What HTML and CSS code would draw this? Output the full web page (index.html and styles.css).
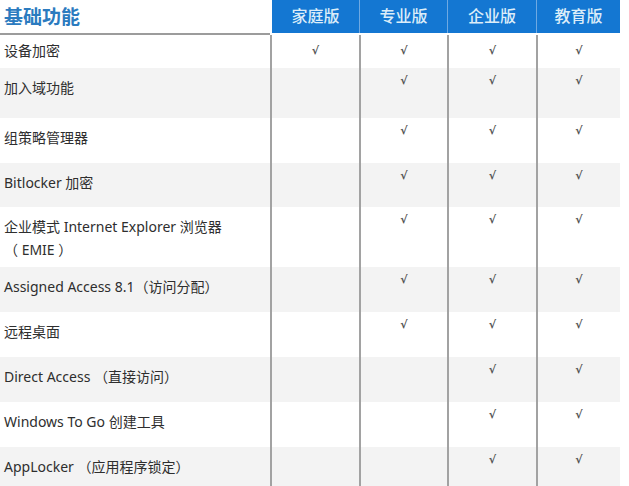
FILE: index.html
```html
<!DOCTYPE html>
<html lang="zh">
<head>
<meta charset="utf-8">
<link rel="stylesheet" href="styles.css">
</head>
<body>
<div class="table">
  <div class="head">
    <div class="title">基础功能</div>
    <div class="ed first">家庭版</div>
    <div class="ed">专业版</div>
    <div class="ed">企业版</div>
    <div class="ed">教育版</div>
  </div>

  <div class="row r1">
    <div class="name">设备加密</div>
    <div class="c">√</div><div class="c">√</div><div class="c">√</div><div class="c">√</div>
  </div>
  <div class="row alt r2">
    <div class="name">加入域功能</div>
    <div class="c"></div><div class="c">√</div><div class="c">√</div><div class="c">√</div>
  </div>
  <div class="row">
    <div class="name">组策略管理器</div>
    <div class="c"></div><div class="c">√</div><div class="c">√</div><div class="c">√</div>
  </div>
  <div class="row alt r4">
    <div class="name">Bitlocker 加密</div>
    <div class="c"></div><div class="c">√</div><div class="c">√</div><div class="c">√</div>
  </div>
  <div class="row r5">
    <div class="name">企业模式 Internet Explorer 浏览器<br>（ EMIE ）</div>
    <div class="c"></div><div class="c">√</div><div class="c">√</div><div class="c">√</div>
  </div>
  <div class="row alt">
    <div class="name">Assigned Access 8.1（访问分配）</div>
    <div class="c"></div><div class="c">√</div><div class="c">√</div><div class="c">√</div>
  </div>
  <div class="row">
    <div class="name">远程桌面</div>
    <div class="c"></div><div class="c">√</div><div class="c">√</div><div class="c">√</div>
  </div>
  <div class="row alt">
    <div class="name">Direct Access （直接访问）</div>
    <div class="c"></div><div class="c"></div><div class="c">√</div><div class="c">√</div>
  </div>
  <div class="row">
    <div class="name">Windows To Go 创建工具</div>
    <div class="c"></div><div class="c"></div><div class="c">√</div><div class="c">√</div>
  </div>
  <div class="row alt last">
    <div class="name">AppLocker （应用程序锁定）</div>
    <div class="c"></div><div class="c"></div><div class="c">√</div><div class="c">√</div>
  </div>
</div>
</body>
</html>
```

FILE: styles.css
```css
html, body {
  margin: 0;
  padding: 0;
  background: #fff;
}

body {
  font-family: "Noto Sans", "Noto Sans CJK SC", sans-serif;
  color: #2e2e2e;
  overflow: hidden;
}

.table {
  width: 620px;
}

.head {
  display: grid;
  grid-template-columns: 270px 89px 88px 89px 84px;
  height: 35px;
}

.title {
  font-family: "Noto Sans CJK SC", sans-serif;
  font-weight: 700;
  font-size: 19px;
  color: #2b7bbf;
  line-height: 31px;
  padding-left: 4px;
  border-bottom: 2px solid #9c9c9c;
  box-sizing: border-box;
  height: 35px;
}

.ed {
  height: 33px;
  background: #1477d2;
  color: #dcedf9;
  font-family: "Noto Sans CJK SC", sans-serif;
  font-weight: 500;
  font-size: 16px;
  line-height: 31px;
  text-align: center;
  border-left: 1px solid #6fa9e2;
}

.ed.first {
  border-left: 2px solid #fff;
}

.row {
  display: grid;
  grid-template-columns: 270px 89px 88px 89px 84px;
  height: 45px;
}

.row.alt {
  background: #f3f3f3;
}

.r1 { height: 33px; }
.r2 { height: 50px; }
.r4 { height: 44px; }
.r5 { height: 60px; }
.last { height: 40px; }

.name {
  font-size: 14px;
  line-height: 23px;
  padding: 8px 0 0 4px;
  white-space: nowrap;
}

.r1 .name { padding-top: 4px; }

.c {
  border-left: 2px solid #a2a2a2;
  text-align: center;
  font-family: "DejaVu Sans", sans-serif;
  font-size: 11px;
  font-weight: 700;
  color: #555;
  line-height: 16px;
  padding-top: 5px;
}

.r1 .c { padding-top: 8px; }
```
